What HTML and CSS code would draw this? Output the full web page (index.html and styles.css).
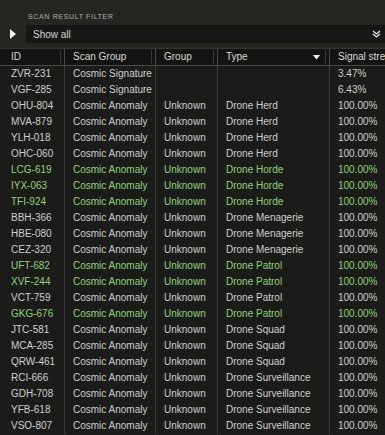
FILE: index.html
```html
<!DOCTYPE html>
<html>
<head>
<meta charset="utf-8">
<link rel="stylesheet" href="styles.css">
</head>
<body>
<div class="panel">
  <div class="label">SCAN RESULT FILTER</div>
  <div class="filter-row">
    <svg class="play" width="6" height="10" viewBox="0 0 6 10"><polygon points="0,0 6,5 0,10" fill="#f2f2f2"/></svg>
    <div class="filter-box">
      <span>Show all</span>
      <svg class="chev" width="9" height="8" viewBox="0 0 9 8"><polyline points="1,1 4.5,4 8,1" fill="none" stroke="#e6e6e6" stroke-width="1.3"/><polyline points="1,4 4.5,7 8,4" fill="none" stroke="#e6e6e6" stroke-width="1.3"/></svg>
    </div>
  </div>
  <div class="table">
    <div class="head">
      <div class="hc">ID</div>
      <div class="hc">Scan Group</div>
      <div class="hc">Group</div>
      <div class="hc type">Type<svg class="sort" width="7" height="5" viewBox="0 0 7 5"><polygon points="0,0 7,0 3.5,4.5" fill="#f0f0f0"/></svg></div>
      <div class="hc last">Signal stre</div>
    </div>
    <div class="body" id="rows"></div>
  </div>
</div>
<script src="app.js"></script>
</body>
</html>
```

FILE: styles.css
```css
html, body {
  margin: 0;
  padding: 0;
  background: #252622;
  width: 385px;
  height: 435px;
  overflow: hidden;
  font-family: "Liberation Sans", Arial, sans-serif;
}
.panel {
  display: flex;
  flex-direction: column;
  height: 435px;
}
.label {
  height: 25px;
  box-sizing: border-box;
  padding: 13px 0 0 28px;
  font-size: 7px;
  line-height: 8px;
  letter-spacing: 0.65px;
  color: #b0b1ad;
}
.filter-row {
  display: flex;
  align-items: center;
  height: 18px;
}
.play {
  margin: 0 10px 0 10px;
  flex: none;
}
.filter-box {
  flex: 1;
  height: 18px;
  background: #171816;
  display: flex;
  align-items: center;
  justify-content: space-between;
  padding: 0 4px 0 7px;
  font-size: 10px;
  color: #d6d6d4;
}
.table {
  margin-top: 5px;
  flex: 1;
  display: flex;
  flex-direction: column;
  background: #1b1c1a;
  padding-left: 2px;
}
.head, .row {
  display: grid;
  grid-template-columns: 62px 91px 62px 112px minmax(0, 1fr);
}
.head {
  height: 16px;
  background: #131312;
  border-top: 1px solid #33342f;
  border-bottom: 1px solid #4a4b47;
  margin-left: -2px;
  padding-left: 2px;
}
.hc {
  position: relative;
  font-size: 10px;
  line-height: 16px;
  color: #d9d9d7;
  padding-left: 9px;
  white-space: nowrap;
  overflow: hidden;
  border-right: 1px solid #4a4b47;
  margin-right: -1px;
}
.hc::after {
  content: "";
  position: absolute;
  right: 3px;
  top: 1px;
  bottom: 1px;
  width: 1px;
  background: #3a3b37;
}
.hc.last { border-right: none; margin-right: 0; }
.hc.last::after { display: none; }
.sort {
  position: absolute;
  right: 9px;
  top: 6px;
}
.body {
  flex: 1;
}
.row {
  height: 16px;
  font-size: 10px;
  line-height: 16px;
  color: #cfd0cd;
}
.row.g { color: #8fd37c; }
.c {
  white-space: nowrap;
  overflow: hidden;
  padding-left: 8px;
  border-left: 1px solid #3b3c38;
}
.c:first-child {
  border-left: none;
  padding-left: 9px;
}
```

FILE: app.js
```js
var data = [
  ["ZVR-231","Cosmic Signature","","","3.47%",0],
  ["VGF-285","Cosmic Signature","","","6.43%",0],
  ["OHU-804","Cosmic Anomaly","Unknown","Drone Herd","100.00%",0],
  ["MVA-879","Cosmic Anomaly","Unknown","Drone Herd","100.00%",0],
  ["YLH-018","Cosmic Anomaly","Unknown","Drone Herd","100.00%",0],
  ["OHC-060","Cosmic Anomaly","Unknown","Drone Herd","100.00%",0],
  ["LCG-619","Cosmic Anomaly","Unknown","Drone Horde","100.00%",1],
  ["IYX-063","Cosmic Anomaly","Unknown","Drone Horde","100.00%",1],
  ["TFI-924","Cosmic Anomaly","Unknown","Drone Horde","100.00%",1],
  ["BBH-366","Cosmic Anomaly","Unknown","Drone Menagerie","100.00%",0],
  ["HBE-080","Cosmic Anomaly","Unknown","Drone Menagerie","100.00%",0],
  ["CEZ-320","Cosmic Anomaly","Unknown","Drone Menagerie","100.00%",0],
  ["UFT-682","Cosmic Anomaly","Unknown","Drone Patrol","100.00%",1],
  ["XVF-244","Cosmic Anomaly","Unknown","Drone Patrol","100.00%",1],
  ["VCT-759","Cosmic Anomaly","Unknown","Drone Patrol","100.00%",0],
  ["GKG-676","Cosmic Anomaly","Unknown","Drone Patrol","100.00%",1],
  ["JTC-581","Cosmic Anomaly","Unknown","Drone Squad","100.00%",0],
  ["MCA-285","Cosmic Anomaly","Unknown","Drone Squad","100.00%",0],
  ["QRW-461","Cosmic Anomaly","Unknown","Drone Squad","100.00%",0],
  ["RCI-666","Cosmic Anomaly","Unknown","Drone Surveillance","100.00%",0],
  ["GDH-708","Cosmic Anomaly","Unknown","Drone Surveillance","100.00%",0],
  ["YFB-618","Cosmic Anomaly","Unknown","Drone Surveillance","100.00%",0],
  ["VSO-807","Cosmic Anomaly","Unknown","Drone Surveillance","100.00%",0]
];
var body = document.getElementById("rows");
data.forEach(function (r) {
  var row = document.createElement("div");
  row.className = "row" + (r[5] ? " g" : "");
  for (var i = 0; i < 5; i++) {
    var c = document.createElement("div");
    c.className = "c";
    c.textContent = r[i];
    row.appendChild(c);
  }
  body.appendChild(row);
});
```
